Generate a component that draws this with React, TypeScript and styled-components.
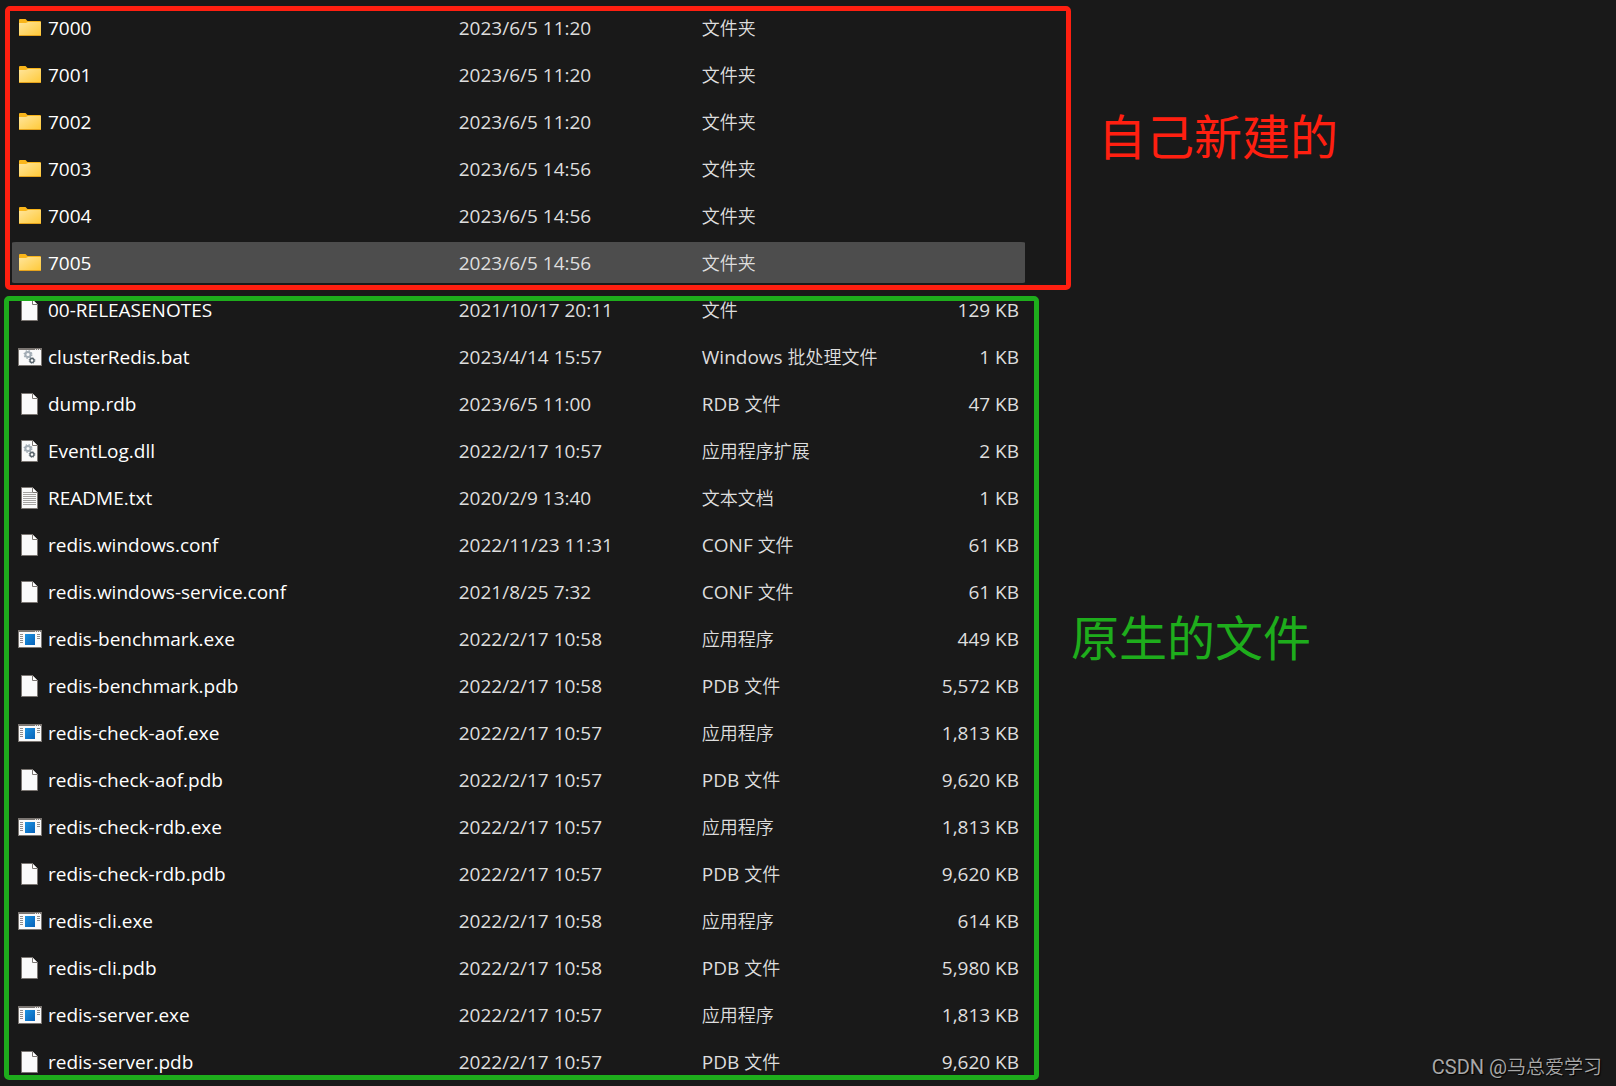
import React from "react";
import styled, { createGlobalStyle } from "styled-components";

const GlobalStyle = createGlobalStyle`
  * { box-sizing: border-box; }
  body {
    margin: 0;
    background: #191919;
    font-family: "Open Sans", "Noto Sans CJK SC", sans-serif;
  }
`;

const Page = styled.main`
  position: relative;
  padding: 4px 0 0 12px;
`;

const Section = styled.section`
  display: flex;
  align-items: flex-start;
`;

const Group = styled.div<{ $gutter: number }>`
  position: relative;
  flex: 1;
  min-width: 0;
  padding-right: ${(p) => p.$gutter}px;
`;

const Frame = styled.div<{ $color: string; $inset: string }>`
  position: absolute;
  inset: ${(p) => p.$inset};
  border: 5px solid ${(p) => p.$color};
  border-radius: 5px;
  pointer-events: none;
`;

const Note = styled.p<{ $color: string; $width: number; $top: number; $gap: number }>`
  flex: none;
  width: ${(p) => p.$width}px;
  margin: ${(p) => p.$top}px 0 0;
  padding-left: ${(p) => p.$gap}px;
  color: ${(p) => p.$color};
  font-family: "Noto Sans CJK SC", sans-serif;
  font-size: 48px;
  font-weight: 400;
  line-height: 64px;
`;

const Table = styled.table`
  width: 100%;
  table-layout: fixed;
  border-collapse: separate;
  border-spacing: 0;
`;

const Row = styled.tr<{ $selected?: boolean }>`
  & > td {
    background-color: ${(p) => (p.$selected ? "#4d4d4d" : "transparent")};
  }
`;

const Cell = styled.td<{ $width: string; $bright?: boolean; $right?: boolean }>`
  width: ${(p) => p.$width};
  height: 47px;
  padding: 0 0 0 1px;
  border: 0 solid transparent;
  border-width: 3px 0;
  background-clip: padding-box;
  color: ${(p) => (p.$bright ? "#ffffff" : "#dedede")};
  font-size: 19px;
  font-weight: 400;
  line-height: 24px;
  text-align: ${(p) => (p.$right ? "right" : "left")};
  white-space: nowrap;

  &:first-child {
    padding-left: 6px;
    border-radius: 4px 0 0 4px;
  }
  &:last-child {
    padding-right: 6px;
    border-radius: 0 4px 4px 0;
  }
`;

const FileName = styled.div`
  display: flex;
  align-items: center;
  gap: 6px;
`;

const Han = styled.span<{ $size: number }>`
  font-family: "Noto Sans CJK SC DemiLight", "Noto Sans CJK SC", sans-serif;
  font-size: ${(p) => p.$size}px;
  font-weight: 350;
  line-height: 1;
`;

const Watermark = styled.div`
  position: absolute;
  right: 14px;
  bottom: 4px;
  color: #a8a8a8;
  font-family: Roboto, "Noto Sans CJK SC", sans-serif;
  font-size: 20px;
  line-height: 28px;
  text-shadow: 1px 1px 1px #000000;
`;

const Icon = styled.svg`
  flex: none;
  width: 24px;
  height: 23px;
`;

type Kind = "folder" | "file" | "bat" | "dll" | "txt" | "exe";

const Gears = () => (
  <>
    <circle cx="10" cy="9.5" r="2.6" fill="none" stroke="#a3adb5" strokeWidth="2" />
    <circle cx="10" cy="9.5" r="3.8" fill="none" stroke="#a3adb5" strokeWidth="1.4" strokeDasharray="1.5 1.5" />
    <circle cx="14" cy="15.5" r="2" fill="#ffffff" stroke="#57636b" strokeWidth="1.4" />
    <circle cx="14" cy="15.5" r="2.9" fill="none" stroke="#57636b" strokeWidth="0.8" strokeDasharray="1.2 1.1" />
  </>
);

const Sheet = () => (
  <>
    <path d="M3.5 1.5H14.5L19.5 6.5V22.5H3.5Z" fill="#fafafa" stroke="#7b7672" />
    <path d="M14.5 1.5V6.5H19.5" fill="#ffffff" stroke="#7b7672" />
  </>
);

const WindowBox = () => (
  <>
    <rect x="0.5" y="3.5" width="23" height="17" fill="#fafafa" stroke="#7b7672" />
    <path d="M0 4H24" stroke="#7b7672" strokeWidth="2" />
    <path d="M17 4.5H18M19 4.5H20M21 4.5H22" stroke="#e4e2e0" />
  </>
);

function FileIcon({ kind }: { kind: Kind }) {
  return (
    <Icon viewBox="0 0 24 23" aria-hidden="true">
      {kind === "folder" && (
        <>
          <defs>
            <linearGradient id="folderFace" x1="0" y1="0" x2="1" y2="1">
              <stop offset="0" stopColor="#ffe59b" />
              <stop offset="1" stopColor="#ffc937" />
            </linearGradient>
          </defs>
          <path d="M1 4Q1 3 2 3H7.500L9.500 5H22Q23 5 23 6V9H1Z" fill="#f9b51a" />
          <path d="M1 7H8L10 6H23V19Q23 20 22 20H2Q1 20 1 19Z" fill="url(#folderFace)" />
          <path d="M1 19.500H23" stroke="#e5a21c" />
        </>
      )}
      {(kind === "file" || kind === "dll" || kind === "txt") && <Sheet />}
      {kind === "txt" && (
        <path
          d="M5 6.500H14M5 8.500H18M5 10.500H18M5 12.500H18M5 14.500H18M5 16.500H18M5 18.500H18"
          stroke="#a5a3a1"
        />
      )}
      {(kind === "bat" || kind === "exe") && <WindowBox />}
      {(kind === "dll" || kind === "bat") && <Gears />}
      {kind === "exe" && (
        <>
          <defs>
            <linearGradient id="appTile" x1="0" y1="0" x2="1" y2="1">
              <stop offset="0" stopColor="#1b93e2" />
              <stop offset="1" stopColor="#0862b8" />
            </linearGradient>
          </defs>
          <rect x="7" y="7" width="10" height="11" fill="url(#appTile)" />
          <path
            d="M2 7.500H5M2 9.500H5M2 11.500H5M2 13.500H5M2 15.500H5M19 7.500H22M19 9.500H22M19 11.500H22"
            stroke="#8f8d8b"
          />
        </>
      )}
    </Icon>
  );
}

/* Chinese runs are set one size smaller than the Latin text beside them. */
function Mixed({ text, size }: { text: string; size: number }) {
  return (
    <>
      {text
        .split(/([\u4e00-\u9fff]+)/)
        .filter(Boolean)
        .map((part, i) =>
          /[\u4e00-\u9fff]/.test(part) ? (
            <Han key={i} $size={size}>
              {part}
            </Han>
          ) : (
            part
          ),
        )}
    </>
  );
}

type Entry = { kind: Kind; name: string; date: string; type: string; size?: string; selected?: boolean };

const folders: Entry[] = [
  { kind: "folder", name: "7000", date: "2023/6/5 11:20", type: "文件夹" },
  { kind: "folder", name: "7001", date: "2023/6/5 11:20", type: "文件夹" },
  { kind: "folder", name: "7002", date: "2023/6/5 11:20", type: "文件夹" },
  { kind: "folder", name: "7003", date: "2023/6/5 14:56", type: "文件夹" },
  { kind: "folder", name: "7004", date: "2023/6/5 14:56", type: "文件夹" },
  { kind: "folder", name: "7005", date: "2023/6/5 14:56", type: "文件夹", selected: true },
];

const files: Entry[] = [
  { kind: "file", name: "00-RELEASENOTES", date: "2021/10/17 20:11", type: "文件", size: "129 KB" },
  { kind: "bat", name: "clusterRedis.bat", date: "2023/4/14 15:57", type: "Windows 批处理文件", size: "1 KB" },
  { kind: "file", name: "dump.rdb", date: "2023/6/5 11:00", type: "RDB 文件", size: "47 KB" },
  { kind: "dll", name: "EventLog.dll", date: "2022/2/17 10:57", type: "应用程序扩展", size: "2 KB" },
  { kind: "txt", name: "README.txt", date: "2020/2/9 13:40", type: "文本文档", size: "1 KB" },
  { kind: "file", name: "redis.windows.conf", date: "2022/11/23 11:31", type: "CONF 文件", size: "61 KB" },
  { kind: "file", name: "redis.windows-service.conf", date: "2021/8/25 7:32", type: "CONF 文件", size: "61 KB" },
  { kind: "exe", name: "redis-benchmark.exe", date: "2022/2/17 10:58", type: "应用程序", size: "449 KB" },
  { kind: "file", name: "redis-benchmark.pdb", date: "2022/2/17 10:58", type: "PDB 文件", size: "5,572 KB" },
  { kind: "exe", name: "redis-check-aof.exe", date: "2022/2/17 10:57", type: "应用程序", size: "1,813 KB" },
  { kind: "file", name: "redis-check-aof.pdb", date: "2022/2/17 10:57", type: "PDB 文件", size: "9,620 KB" },
  { kind: "exe", name: "redis-check-rdb.exe", date: "2022/2/17 10:57", type: "应用程序", size: "1,813 KB" },
  { kind: "file", name: "redis-check-rdb.pdb", date: "2022/2/17 10:57", type: "PDB 文件", size: "9,620 KB" },
  { kind: "exe", name: "redis-cli.exe", date: "2022/2/17 10:58", type: "应用程序", size: "614 KB" },
  { kind: "file", name: "redis-cli.pdb", date: "2022/2/17 10:58", type: "PDB 文件", size: "5,980 KB" },
  { kind: "exe", name: "redis-server.exe", date: "2022/2/17 10:57", type: "应用程序", size: "1,813 KB" },
  { kind: "file", name: "redis-server.pdb", date: "2022/2/17 10:57", type: "PDB 文件", size: "9,620 KB" },
];

function FileTable({ rows }: { rows: Entry[] }) {
  return (
    <Table>
      <tbody>
        {rows.map((row) => (
          <Row key={row.name} $selected={row.selected}>
            <Cell $width="44%" $bright>
              <FileName>
                <FileIcon kind={row.kind} />
                <span>{row.name}</span>
              </FileName>
            </Cell>
            <Cell $width="24%">{row.date}</Cell>
            <Cell $width="20%">
              <Mixed text={row.type} size={18} />
            </Cell>
            <Cell $width="12%" $right>
              {row.size}
            </Cell>
          </Row>
        ))}
      </tbody>
    </Table>
  );
}

export default function App() {
  return (
    <>
      <GlobalStyle />
      <Page>
        <Section>
          <Group $gutter={46}>
            <FileTable rows={folders} />
            <Frame $color="#ff1f10" $inset="2px 0 -4px -7px" />
          </Group>
          <Note $color="#ff1f10" $width={545} $top={98} $gap={27}>
            自己新建的
          </Note>
        </Section>
        <Section>
          <Group $gutter={14}>
            <FileTable rows={files} />
            <Frame $color="#1ead1c" $inset="10px 0 5px -8px" />
          </Group>
          <Note $color="#1ead1c" $width={577} $top={317} $gap={32}>
            原生的文件
          </Note>
        </Section>
        <Watermark>
          <Mixed text="CSDN @马总爱学习" size={19} />
        </Watermark>
      </Page>
    </>
  );
}
